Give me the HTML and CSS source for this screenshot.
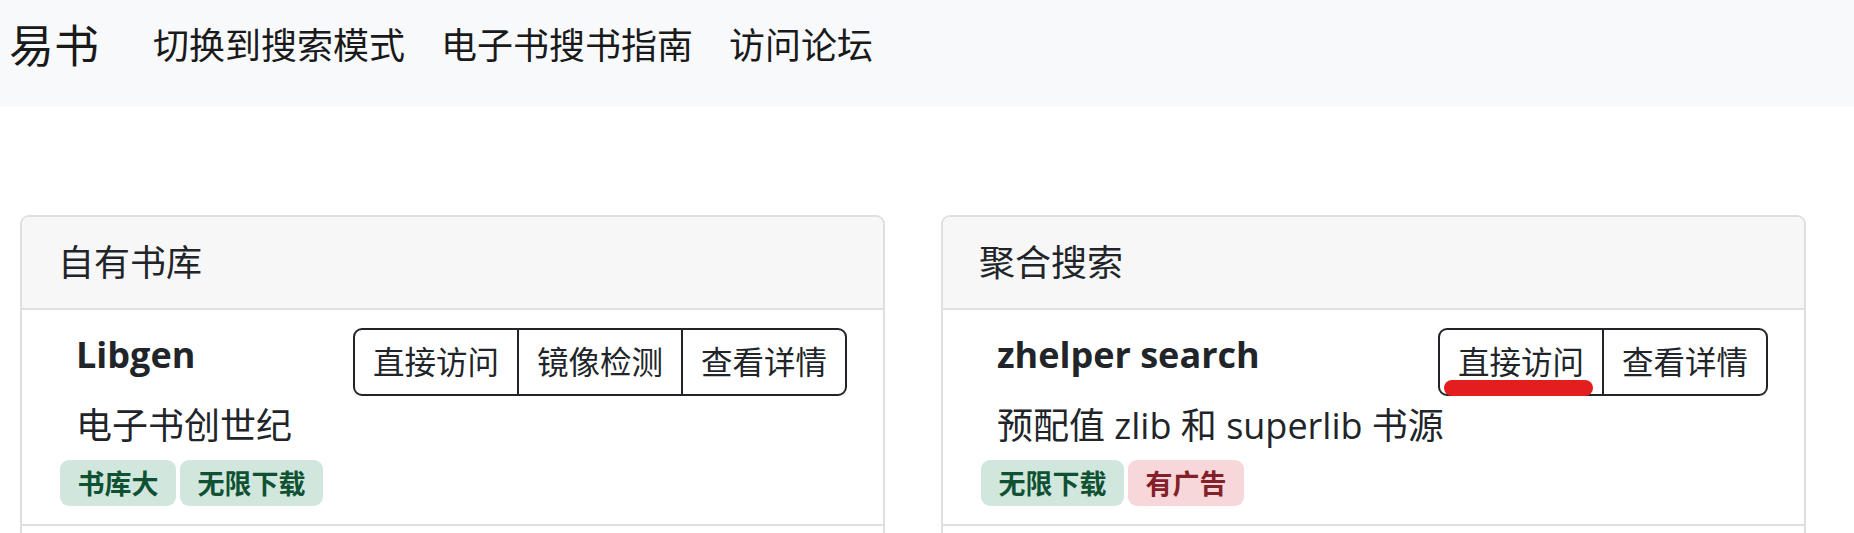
FILE: index.html
```html
<!DOCTYPE html>
<html lang="zh-CN">
<head>
<meta charset="utf-8">
<title>易书</title>
<link rel="stylesheet" href="styles.css">
</head>
<body>
<nav class="navbar">
  <a class="brand" href="#">易书</a>
  <div class="nav-links">
    <a class="nav-link" href="#">切换到搜索模式</a>
    <a class="nav-link" href="#">电子书搜书指南</a>
    <a class="nav-link" href="#">访问论坛</a>
  </div>
</nav>
<main class="cards">
  <section class="card">
    <div class="card-header">自有书库</div>
    <div class="item">
      <div class="item-top">
        <h5 class="title">Libgen</h5>
        <div class="btn-group">
          <a class="btn" href="#">直接访问</a>
          <a class="btn" href="#">镜像检测</a>
          <a class="btn" href="#">查看详情</a>
        </div>
      </div>
      <div class="desc">电子书创世纪</div>
      <div class="badges">
        <span class="badge badge-green">书库大</span>
        <span class="badge badge-green">无限下载</span>
      </div>
    </div>
    <div class="item item-more"></div>
  </section>
  <section class="card">
    <div class="card-header">聚合搜索</div>
    <div class="item">
      <div class="item-top">
        <h5 class="title">zhelper search</h5>
        <div class="btn-group">
          <a class="btn" href="#">直接访问<span class="marker"></span></a>
          <a class="btn" href="#">查看详情</a>
        </div>
      </div>
      <div class="desc">预配值 zlib 和 superlib 书源</div>
      <div class="badges">
        <span class="badge badge-green">无限下载</span>
        <span class="badge badge-red">有广告</span>
      </div>
    </div>
    <div class="item item-more"></div>
  </section>
</main>
</body>
</html>
```
FILE: styles.css
```css
* {
  box-sizing: border-box;
}

html, body {
  margin: 0;
  padding: 0;
  background: #ffffff;
}

body {
  font-family: "Open Sans", "Noto Sans CJK SC", sans-serif;
  color: #212529;
  overflow: hidden;
}

a {
  text-decoration: none;
  color: inherit;
}

.navbar {
  display: flex;
  align-items: center;
  height: 107px;
  padding: 0 9px 15px;
  background: #f8f9fa;
}

.brand {
  font-size: 45px;
  line-height: 1.5;
  margin-right: 36px;
  color: #1a1a1a;
}

.nav-links {
  display: flex;
}

.nav-link {
  padding: 0 18px;
  font-size: 36px;
  line-height: 1.5;
  color: #1a1a1a;
}

.cards {
  display: grid;
  grid-template-columns: 865px 865px;
  column-gap: 56px;
  align-items: start;
  padding: 108px 0 0 20px;
}

.card {
  border: 2px solid #dfdfdf;
  border-radius: 9px;
  overflow: hidden;
  background: #fff;
}

.card-header {
  background: #f7f7f7;
  padding: 19px 36px 18px;
  font-size: 36px;
  line-height: 54px;
  border-bottom: 2px solid #dfdfdf;
}

.item {
  padding: 18px 36px 18px 38px;
  border-bottom: 2px solid #dfdfdf;
}

.item-more {
  height: 120px;
  border-bottom: none;
}

.item-top {
  display: flex;
  justify-content: space-between;
  align-items: flex-start;
}

.title {
  margin: 0;
  padding-left: 16px;
  font-size: 36px;
  font-weight: 700;
  line-height: 54px;
}

.btn-group {
  display: flex;
  border: 2px solid #212529;
  border-radius: 9px;
}

.btn {
  position: relative;
  display: block;
  padding: 9px 18px;
  font-size: 31.5px;
  line-height: 46px;
  color: #212529;
  border-left: 2px solid #212529;
}

.btn:first-child {
  border-left: none;
}

.marker {
  position: absolute;
  left: 4px;
  top: 50px;
  width: 149px;
  height: 16px;
  border-radius: 8px;
  background: #e41e1f;
}

.desc {
  margin-top: 3px;
  padding-left: 16px;
  font-size: 36px;
  line-height: 54px;
}

.badges {
  display: flex;
  gap: 4px;
  margin-top: 7px;
}

.badge {
  display: inline-block;
  font-size: 27px;
  font-weight: 700;
  line-height: 1;
  padding: 9.5px 17.5px;
  border-radius: 9px;
}

.badge-green {
  background: #d1e7dd;
  color: #0f5132;
}

.badge-red {
  background: #f8d7da;
  color: #842029;
}
```
